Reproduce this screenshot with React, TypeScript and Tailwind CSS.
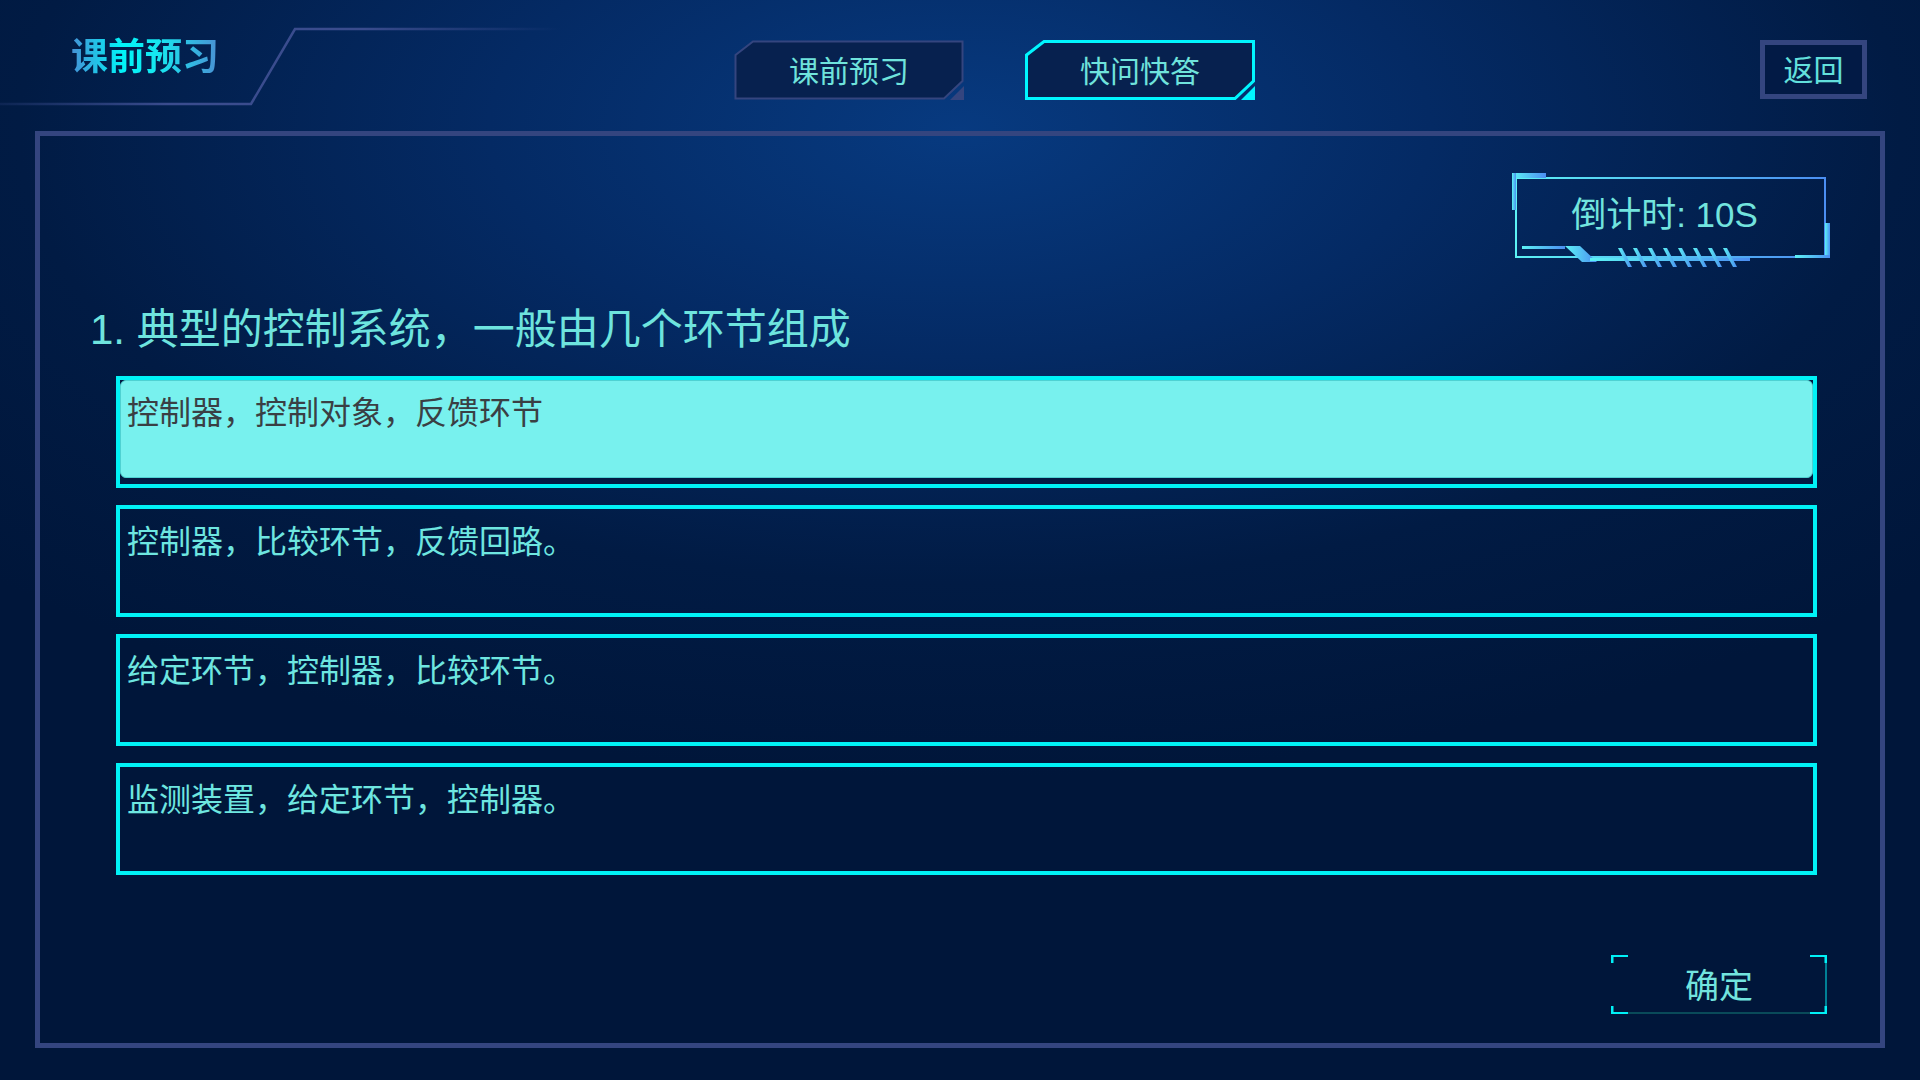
import React from "react";

const FONT = { fontFamily: '"Liberation Sans", "Noto Sans CJK SC", "Noto Sans", sans-serif' };

const OPTIONS = [
  "控制器，控制对象，反馈环节",
  "控制器，比较环节，反馈回路。",
  "给定环节，控制器，比较环节。",
  "监测装置，给定环节，控制器。",
];

function Tab({ label, active }: { label: string; active?: boolean }) {
  const stroke = active ? "#00f6ff" : "#34457f";
  return (
    <button className="relative w-[230px] h-[60px] shrink-0 flex items-center justify-center">
      <svg className="absolute inset-0" width="230" height="60" viewBox="0 0 230 60">
        <polygon
          points="19,1.5 228.5,1.5 228.5,41 210,58.5 1.5,58.5 1.5,15"
          fill="#07214f"
          stroke={stroke}
          strokeWidth={active ? 3 : 2}
        />
        <polygon points="230,46 230,60 216,60" fill={stroke} />
      </svg>
      <span className="relative text-[30px] text-[#6fe3dc] leading-none pt-[3px]">{label}</span>
    </button>
  );
}

function TimerFrame() {
  const stripes = Array.from({ length: 8 }, (_, i) => 108 + i * 15);
  return (
    <svg className="absolute left-[-2px] top-[-3px]" width="325" height="100" viewBox="0 0 325 100">
      <defs>
        <linearGradient id="tg" x1="0" y1="0" x2="1" y2="0">
          <stop offset="0" stopColor="#5cf2f4" />
          <stop offset="1" stopColor="#4b8ef2" />
        </linearGradient>
      </defs>
      <rect x="6" y="8" width="309" height="79" fill="none" stroke="url(#tg)" strokeWidth="2" />
      <g fill="url(#tg)">
        <rect x="2" y="3" width="34" height="5" />
        <rect x="2" y="3" width="4" height="37" />
        <rect x="315" y="53" width="5" height="35" />
        <rect x="285" y="85" width="35" height="3" />
        <rect x="12" y="76" width="43" height="3" />
        <polygon points="55,76 70,76 87,92 72,92" />
        <rect x="80" y="88" width="160" height="3" />
        {stripes.map((x) => (
          <polygon key={x} points={`${x},78 ${x + 4},78 ${x + 14},97 ${x + 10},97`} />
        ))}
      </g>
    </svg>
  );
}

function ConfirmButton() {
  return (
    <button className="relative w-[216px] h-[59px] flex items-center justify-center">
      <svg className="absolute inset-0" width="216" height="59" viewBox="0 0 216 59">
        <line x1="16" y1="58" x2="200" y2="58" stroke="#0c5d64" strokeWidth="1.5" />
        <line x1="215" y1="0" x2="215" y2="59" stroke="#00e8f0" strokeWidth="1" />
        <g fill="#00f0f6">
          <rect x="0" y="0" width="17" height="2" />
          <rect x="0" y="0" width="2.5" height="8" />
          <rect x="0" y="57" width="17" height="2" />
          <rect x="0" y="51" width="2.5" height="8" />
          <rect x="199" y="0" width="17" height="2" />
          <rect x="213.5" y="0" width="2.5" height="8" />
          <rect x="199" y="57" width="17" height="2" />
          <rect x="213.5" y="51" width="2.5" height="8" />
        </g>
      </svg>
      <span className="relative text-[34px] leading-none text-[#72e4de] pt-[3px]">确定</span>
    </button>
  );
}

export default function App() {
  return (
    <div
      style={FONT}
      className="w-[1920px] h-[1080px] overflow-hidden flex flex-col bg-[radial-gradient(ellipse_70%_60%_at_50%_12%,#073a80_0%,#042a64_35%,#011b44_70%,#00163a_100%)]"
    >
      {/* Header */}
      <header className="relative h-[131px] shrink-0 flex items-start">
        <svg className="absolute left-0 top-0" width="560" height="110" viewBox="0 0 560 110">
          <defs>
            <linearGradient id="hl" x1="0" y1="0" x2="1" y2="0">
              <stop offset="0" stopColor="#3a4c8e" stopOpacity="0.2" />
              <stop offset="0.3" stopColor="#3a4c8e" />
              <stop offset="0.65" stopColor="#3a4c8e" />
              <stop offset="1" stopColor="#3a4c8e" stopOpacity="0" />
            </linearGradient>
          </defs>
          <polyline points="0,104 251,104 295,29 560,29" fill="none" stroke="url(#hl)" strokeWidth="2.5" />
        </svg>

        <div className="relative w-[734px] shrink-0 pl-[71px] pt-[39px]">
          <span className="text-[37px] font-bold leading-none bg-[linear-gradient(90deg,#4590d6_0%,#00f4f8_35%,#18e6f0_60%,#4a90d4_100%)] bg-clip-text text-transparent">
            课前预习
          </span>
        </div>

        <div className="flex gap-[61px] pt-[40px]">
          <Tab label="课前预习" />
          <Tab label="快问快答" active />
        </div>

        <button className="ml-auto mr-[53px] mt-[40px] w-[107px] h-[59px] border-[5px] border-[#34457f] bg-[#021a45] flex items-center justify-center">
          <span className="text-[30px] leading-none text-[#62e0dc] pt-[3px]">返回</span>
        </button>
      </header>

      {/* Main panel */}
      <main className="mx-[35px] h-[917px] border-[5px] border-[#34457f] flex flex-col">
        <div className="flex justify-end pt-[37px] pr-[51px]">
          <div className="relative w-[317px] h-[85px] flex items-center justify-center">
            <TimerFrame />
            <span className="relative text-[35px] leading-none text-[#72e4de] pr-[12px] pb-[2px]">倒计时: 10S</span>
          </div>
        </div>

        <h1 className="mt-[48px] pl-[50px] text-[42px] leading-[48px] text-[#6ee4de] font-normal">
          1. 典型的控制系统，一般由几个环节组成
        </h1>

        <div className="mt-[22px] ml-[76px] mr-[63px] flex flex-col gap-[17px]">
          {OPTIONS.map((opt, i) =>
            i === 0 ? (
              <div key={opt} className="h-[112px] border-[4px] border-[#00f2f6] bg-[#021a42] flex flex-col">
                <div className="h-[98px] rounded-[6px] bg-[#78f1ee] border border-[#4fd2d2] pl-[6px] pt-[12px]">
                  <span className="text-[32px] leading-[40px] text-[#3a3f44]">{opt}</span>
                </div>
              </div>
            ) : (
              <div key={opt} className="h-[112px] border-[4px] border-[#00f2f6] pl-[7px] pt-[13px]">
                <span className="text-[32px] leading-[40px] text-[#6ee6e0]">{opt}</span>
              </div>
            )
          )}
        </div>

        <div className="mt-auto mb-[29px] mr-[53px] flex justify-end">
          <ConfirmButton />
        </div>
      </main>
    </div>
  );
}
